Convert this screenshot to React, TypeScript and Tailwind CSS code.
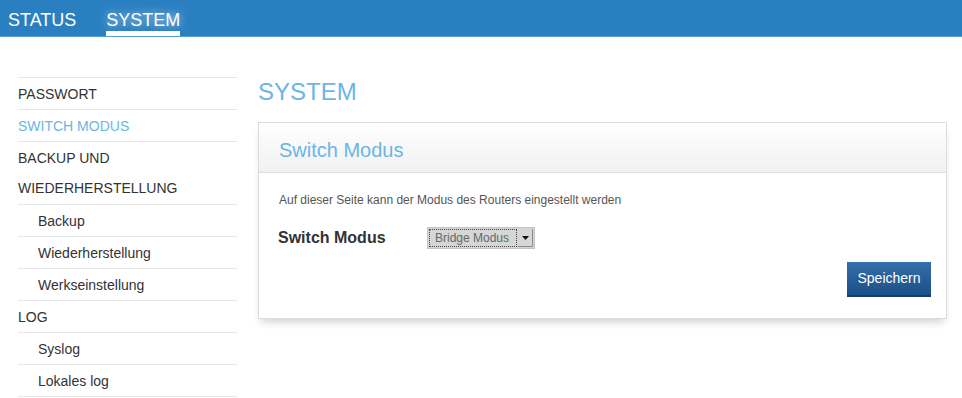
import React from "react";

const navItems = [
  { label: "PASSWORT", sub: false },
  { label: "SWITCH MODUS", sub: false, active: true },
  { label: "BACKUP UND WIEDERHERSTELLUNG", sub: false, wrap: true },
  { label: "Backup", sub: true },
  { label: "Wiederherstellung", sub: true },
  { label: "Werkseinstellung", sub: true },
  { label: "LOG", sub: false },
  { label: "Syslog", sub: true },
  { label: "Lokales log", sub: true },
];

function Sidebar() {
  return (
    <ul className="w-[219px] shrink-0 border-b border-[#e6e6e6]">
      {navItems.map((item) => (
        <li
          key={item.label}
          className={`border-t border-[#e6e6e6] pt-[1px] text-[14px] leading-[30px] ${item.wrap ? "pb-[1px]" : ""} ${
            item.sub ? "pl-5" : ""
          } ${item.active ? "text-[#6cb5e5]" : "text-[#333]"}`}
        >
          {item.wrap ? (
            <>
              BACKUP UND
              <br />
              WIEDERHERSTELLUNG
            </>
          ) : (
            item.label
          )}
        </li>
      ))}
    </ul>
  );
}

function FakeSelect() {
  return (
    <div className="flex h-[22px] w-[108px] items-stretch border border-[#c4c4c4] bg-[#d6d6d6] p-[1px]">
      <div className="flex flex-1 items-center border border-dotted border-[#444] pl-[5px] text-[12px] text-[#666]">
        Bridge Modus
      </div>
      <div className="ml-[1px] flex w-[15px] items-center justify-center border-b border-r border-b-[#8a8a8a] border-r-[#8a8a8a]">
        <svg width="7" height="4" viewBox="0 0 7 4">
          <path d="M0 0h7L3.5 4z" fill="#111" />
        </svg>
      </div>
    </div>
  );
}

export default function App() {
  return (
    <div className="min-h-screen bg-white font-['Liberation_Sans',Arial,sans-serif]">
      <header className="h-[37px] border-b border-[#5a9fd4] bg-[#2a7fc1]">
        <nav className="flex h-[36px] gap-[30px] pl-2 text-[18px] leading-[20px] text-white">
          <span className="pt-[10px]">STATUS</span>
          <span className="border-b-[5px] border-white pt-[10px] [text-shadow:0_0_8px_rgba(255,255,255,0.75)]">
            SYSTEM
          </span>
        </nav>
      </header>

      <div className="flex gap-[21px] pl-[18px] pr-[15px] pt-[40px]">
        <Sidebar />

        <main className="flex-1">
          <h1 className="text-[24px] leading-[30px] text-[#6cb5e5]">SYSTEM</h1>

          <section className="mt-[15px] border border-[#dcdcdc] shadow-[0_6px_8px_-3px_rgba(0,0,0,0.18)]">
            <div className="border-b border-[#dedede] bg-linear-to-b from-white to-[#f1f1f1] pb-[10px] pl-5 pt-[15px] text-[20px] leading-[24px] text-[#6cb5e5]">
              Switch Modus
            </div>
            <div className="pb-[21px] pl-5 pr-[15px] pt-[19px]">
              <p className="text-[12px] leading-[16px] text-[#555]">
                Auf dieser Seite kann der Modus des Routers eingestellt werden
              </p>
              <div className="mt-[18px] flex items-center">
                <label className="-ml-px w-[149px] text-[16px] font-bold text-[#333]">Switch Modus</label>
                <FakeSelect />
              </div>
              <div className="mt-[12px] flex justify-end">
                <button className="h-[35px] w-[84px] border-b-2 border-[#173f6b] bg-linear-to-b from-[#346fa9] to-[#1c4f87] text-[14px] text-white">
                  Speichern
                </button>
              </div>
            </div>
          </section>
        </main>
      </div>
    </div>
  );
}
